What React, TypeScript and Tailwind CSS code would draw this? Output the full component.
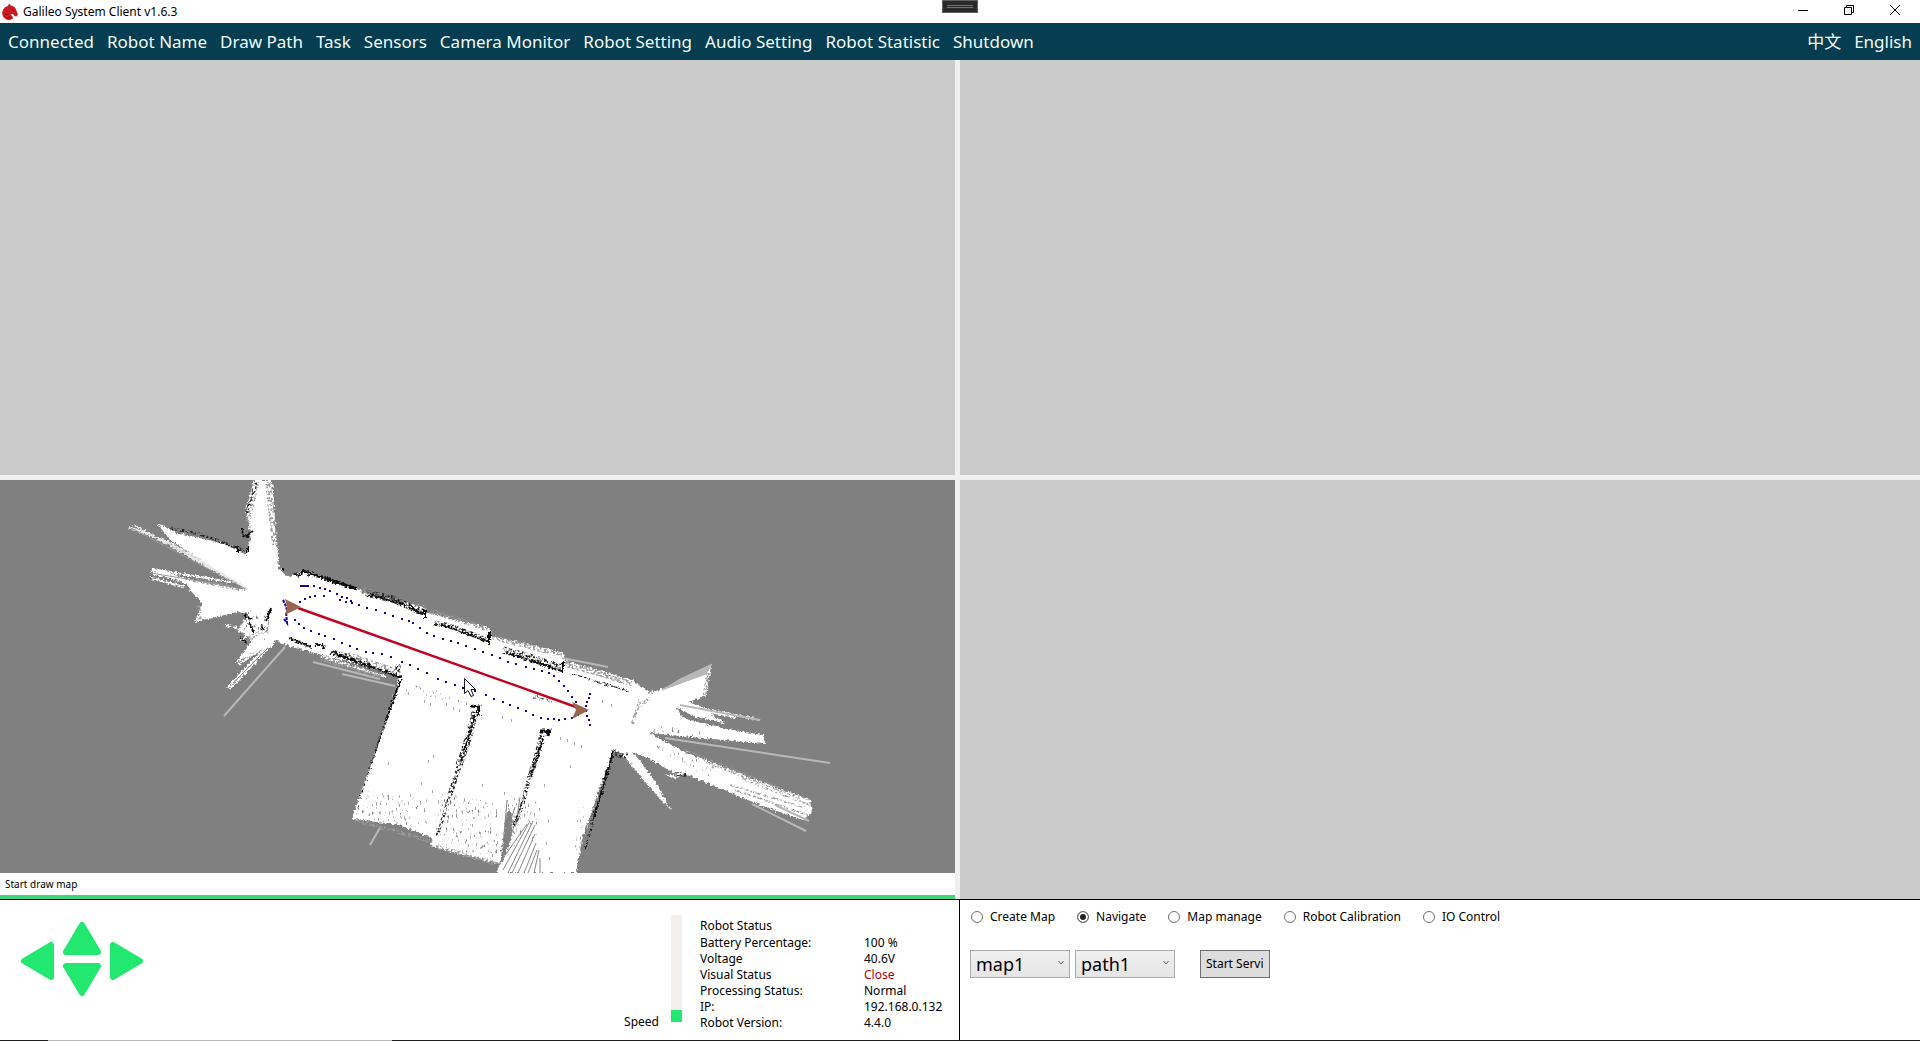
import React, { useState } from "react";

const font = "font-['Noto_Sans','Noto_Sans_CJK_SC',sans-serif]";

const menuItems = [
  "Connected",
  "Robot Name",
  "Draw Path",
  "Task",
  "Sensors",
  "Camera Monitor",
  "Robot Setting",
  "Audio Setting",
  "Robot Statistic",
  "Shutdown",
];

const statusRows = [
  { label: "Battery Percentage:", value: "100 %" },
  { label: "Voltage", value: "40.6V" },
  { label: "Visual Status", value: "Close", alert: true },
  { label: "Processing Status:", value: "Normal" },
  { label: "IP:", value: "192.168.0.132" },
  { label: "Robot Version:", value: "4.4.0" },
];

const modes = ["Create Map", "Navigate", "Map manage", "Robot Calibration", "IO Control"];

// waypoints of the planned path, in map coordinates
const pathDots: number[][] = [
  [314, 586], [320, 588], [325, 589], [330, 591], [337, 594], [342, 597], [347, 598], [352, 603],
  [359, 605], [367, 608], [376, 610], [385, 613], [393, 616], [402, 619], [409, 621], [413, 623],
  [420, 628], [427, 633], [434, 636], [443, 639], [451, 641], [458, 643], [466, 646], [475, 649],
  [483, 652], [492, 655], [500, 658], [508, 662], [516, 664], [526, 667], [534, 669], [542, 671],
  [549, 673], [554, 676], [559, 681], [564, 686], [568, 691], [572, 697], [576, 702],
  [315, 596], [310, 597], [305, 599], [300, 602], [324, 596], [340, 600], [346, 602], [351, 601],
  [295, 620], [299, 624], [304, 628], [311, 631], [319, 634], [325, 636], [334, 639], [342, 643],
  [350, 646], [357, 649], [366, 652], [373, 653], [382, 654], [391, 657], [402, 662], [410, 665],
  [418, 669], [427, 673], [438, 679], [446, 682], [455, 685], [463, 688], [475, 691], [486, 695],
  [494, 699], [503, 702], [510, 705], [518, 708], [526, 711], [533, 715], [541, 718], [548, 719],
  [554, 719], [559, 720], [565, 719], [572, 718], [578, 715],
  [590, 694], [589, 698], [587, 702], [586, 706], [586, 711], [587, 716], [589, 720], [590, 725],
];

const specks: number[][] = [
  [424, 700], [430, 703], [446, 703], [453, 707], [459, 709], [502, 716], [511, 719], [560, 737],
  [567, 739], [574, 742], [581, 745], [602, 700], [611, 704], [433, 755], [428, 760], [421, 782],
  [410, 794], [420, 801], [432, 790], [399, 804], [376, 802], [369, 813], [389, 812], [405, 818],
  [447, 820], [462, 811], [475, 807], [482, 784], [464, 798], [504, 792], [544, 784], [539, 808],
  [548, 820], [570, 765], [546, 842], [488, 814], [472, 824], [453, 828], [388, 762], [392, 694],
  [408, 692], [549, 857], [476, 843], [482, 845], [497, 841], [492, 854], [438, 800],
];

const Arrow = ({ d, label, className }: { d: string; label: string; className?: string }) => (
  <button aria-label={label} className={className}>
    <svg viewBox="0 0 40 40" className="w-10 h-10">
      <path d={d} fill="#22e871" stroke="#22e871" strokeWidth="6" strokeLinejoin="round" />
    </svg>
  </button>
);

const Horse = () => (
  <svg viewBox="0 0 16 18" className="w-4 h-[18px]" aria-hidden="true">
    <path
      d="M6 3 7 0.500 9 2.500C12 3 14 5 14.500 8L16 11.500 14.500 13.500 12.500 13 11 11 8.500 11.500 10.500 13.500 11 15.500 8 17C4 17 1 15 0.300 11 0 7 2 4 6 3Z"
      fill="#c81a20"
    />
    <path d="M3 12 6 11M5 15 9 14M10.500 7 12 7.500" stroke="#8c1015" fill="none" />
  </svg>
);

const TitleBar = () => (
  <header className="h-[23px] shrink-0 flex items-center justify-between bg-white text-black relative">
    <div className="flex items-center gap-[5px] pl-0.5">
      <Horse />
      <h1 className="text-xs">Galileo System Client v1.6.3</h1>
    </div>
    <div className="absolute left-1/2 top-0 w-9 h-[13px] -translate-x-1/2 border border-[#606060] bg-[#2b2b2b] px-1 pt-1">
      <div className="h-[3px] border-y border-[#707070]" />
    </div>
    <div className="flex h-full pr-0.5">
      <button aria-label="Minimize" className="w-[46px] flex justify-center">
        <svg viewBox="0 0 12 12" className="w-3 h-3 mt-1">
          <path d="M1 6.500H11" stroke="#000" />
        </svg>
      </button>
      <button aria-label="Restore" className="w-[46px] flex justify-center">
        <svg viewBox="0 0 12 12" className="w-3 h-3 mt-1">
          <path d="M1.500 3.500H8.500V10.500H1.500ZM3.500 3.500V1.500H10.500V8.500H8.500" fill="none" stroke="#000" />
        </svg>
      </button>
      <button aria-label="Close" className="w-[46px] flex justify-center">
        <svg viewBox="0 0 12 12" className="w-3 h-3 mt-1">
          <path d="M1 1 11 11M11 1 1 11" stroke="#000" />
        </svg>
      </button>
    </div>
  </header>
);

const MenuBar = () => (
  <nav className="h-[37px] shrink-0 flex items-center justify-between bg-[#073d50] text-[#f0fafa] text-[17px] px-2">
    <div className="flex gap-[13px]">
      {menuItems.map((item) => (
        <button key={item}>{item}</button>
      ))}
    </div>
    <div className="flex gap-[13px]">
      <button lang="zh">中文</button>
      <button>English</button>
    </div>
  </nav>
);

const RobotMap = () => (
  <svg
    viewBox="0 480 955 393"
    preserveAspectRatio="xMidYMid slice"
    className="absolute inset-0 w-full h-full"
    role="img"
    aria-label="Robot map"
  >
    <defs>
      <filter id="rough" x="0" y="480" width="955" height="393" filterUnits="userSpaceOnUse">
        <feTurbulence type="fractalNoise" baseFrequency="0.4" numOctaves="2" seed="4" />
        <feDisplacementMap in="SourceGraphic" scale="5" xChannelSelector="R" yChannelSelector="G" />
      </filter>
      {/* breaks a solid shape up into scattered scan hits */}
      <filter id="grain" x="0" y="480" width="955" height="393" filterUnits="userSpaceOnUse">
        <feTurbulence type="fractalNoise" baseFrequency="0.45" numOctaves="2" seed="9" />
        <feColorMatrix values="0 0 0 0 0  0 0 0 0 0  0 0 0 0 0  5 0 0 0 -2.200" result="mask" />
        <feComposite in="SourceGraphic" in2="mask" operator="in" />
      </filter>
      <filter id="sparse" x="0" y="480" width="955" height="393" filterUnits="userSpaceOnUse">
        <feTurbulence type="fractalNoise" baseFrequency="0.5 0.2" numOctaves="2" seed="21" />
        <feColorMatrix values="0 0 0 0 0  0 0 0 0 0  0 0 0 0 0  8 0 0 0 -5.100" result="mask" />
        <feComposite in="SourceGraphic" in2="mask" operator="in" />
      </filter>
    </defs>
    <rect y="480" width="955" height="393" fill="#808080" />
    <g filter="url(#rough)">
      {/* scanned free space */}
      <g fill="#fff">
        <path d="M254 480H272L279 569 288 577 297 574 301 570 358 588 362 593 424 607 426 612 489 628 492 636 562 652 566 661 632 680 650 693 674 685 711 666 706 695 680 706 695 714 722 728 763 735 765 744 649 733 683 751 741 774 810 800 812 812 803 820 760 805 685 774 674 779 632 757 613 750 582 840 576 873H496L500 864 466 856 430 846 433 839 425 835 399 825 352 819 360 795 380 740 400 676 342 660 311 652 289 646 275 640 235 664 252 640 238 630 249 614 237 612 195 622 202 603 190 590 187 584 150 571 154 568 190 580 246 590 170 540 157 523 178 533 230 545 246 555 251 535 246 510Z" />
        <path d="M620 752 633 753 653 778 671 810 661 800 640 776Z" />
        <path d="M650 690 700 706 725 723 690 720Z" />
      </g>
      {/* gaps between the scan rays */}
      <g fill="#808080">
        <path d="M676 707 696 717 757 731 709 725 683 718Z" />
        <path d="M505 822 509 808 513 822 511 838 503 862 500 866Z" />
        <path d="M632 752 652 760 680 776 654 773 656 778Z" />
        <path d="M230 633 237 641 228 638ZM226 626 240 629 228 629Z" />
      </g>
      <g stroke="#fff" strokeWidth="2" fill="none">
        <path d="M129 527 170 543 246 588M134 525 248 590" stroke="#e8e8e8" />
        <path d="M152 569 230 582M154 574 224 588M151 578 184 587" />
        <path d="M274 642 230 689M270 643 228 687M238 665 274 640M240 640 262 628M238 632 252 624M225 625 240 629" />
        <path d="M322 656 360 669M332 660 386 677" />
        <path d="M680 704 760 720M675 705 735 717" />
      </g>
    </g>
    {/* single far rays */}
    <g stroke="#b8b8b8" strokeWidth="2" fill="none">
      <path d="M285 647 224 716" />
      <path d="M342 674 395 686M313 662 380 679M370 845 381 826" />
      <path d="M562 658 608 667M680 705 760 720" />
      <path d="M665 738 830 763" />
      <path d="M752 804 806 831M775 805 809 821" />
      <path d="M712 664 706 674 662 690 680 679Z" fill="#b8b8b8" strokeWidth="1" />
    </g>
    <g stroke="#9a9a9a" fill="none">
      <path d="M133 529 246 589M151 573 230 586M233 683 268 648M324 661 380 676" />
      <path d="M565 663 629 681M567 667 620 681" strokeDasharray="3 2" />
    </g>
    <g stroke="#999" fill="none" filter="url(#grain)">
      <path d="M685 750 810 800M705 762 800 798M730 785 806 808M735 790 808 815M740 778 812 806" strokeWidth="2" />
      <path d="M363 589 422 609M430 611 488 629M492 637 562 655M565 663 632 684" strokeWidth="5" />
      <path d="M268 482 275 545" strokeWidth="6" />
      <path d="M257 482 247 525" strokeWidth="5" />
      <path d="M345 654 395 671M320 658 380 676" strokeWidth="6" />
      <path d="M708 670 704 698M640 700 632 725M650 698 640 706" strokeWidth="3" />
      <path d="M195 580 240 589M198 605 200 620M245 640 270 628" strokeWidth="4" />
      <path d="M355 820 430 841M434 846 500 865" strokeWidth="4" />
    </g>
    <g fill="#888" filter="url(#sparse)">
      <path d="M362 790 430 800 428 835 354 818Z" />
      <path d="M440 790 500 805 497 862 434 844Z" />
      <path d="M506 795 540 800 538 840 504 850Z" />
      <path d="M400 680 470 700 470 706 400 690ZM655 745 720 765 712 778 660 757ZM650 725 700 730V734H650Z" />
      <path d="M578 805 590 810 582 850H575ZM244 610 270 612 268 640 240 640Z" />
    </g>
    {/* fan of rays at the bottom edge */}
    <path
      d="M527 824 499 864M530 821 503 870M533 821 508 873M535 825 512 873M535 834 518 873M536 843 524 873M537 850 528 873M539 850 534 873M524 797 510 838M515 807 506 835M507 800 504 835M520 797 516 825M540 858V873"
      stroke="#888"
      fill="none"
    />
    {/* walls */}
    <g stroke="#222" fill="none" filter="url(#grain)">
      <path d="M366 593 393 599 424 613" strokeWidth="7" />
      <path d="M434 623 450 626 487 640" strokeWidth="5" />
      <path d="M503 650 527 656 562 668" strokeWidth="7" />
      <path d="M330 652 344 656 372 667" strokeWidth="6" />
      <path d="M475 712 469 736 459 765" strokeWidth="7" />
      <path d="M461 760 450 795" strokeWidth="5" />
      <path d="M450 795 437 836" strokeWidth="3" />
      <path d="M542 735 536 758 529 779" strokeWidth="5" />
      <path d="M530 775 522 806 514 826" strokeWidth="4" />
      <path d="M398 686 386 721 372 760" strokeWidth="2" />
      <path d="M170 528 200 534 245 551" strokeWidth="3" />
      <path d="M256 483 246 514" strokeWidth="3" />
      <path d="M612 750 620 756 628 755M676 775 686 774M398 664V676" strokeWidth="5" />
      <path d="M539 699 552 701M532 698 540 696" strokeWidth="3" stroke="#666" />
    </g>
    <g stroke="#111" fill="none" filter="url(#rough)">
      <path d="M300 576 303 571 357 589" strokeWidth="3" />
      <path d="M370 595 400 603 423 614M440 624 487 641M510 654 562 671" strokeWidth="2" strokeDasharray="18 2" />
      <path d="M573 674 628 691" />
      <path d="M489 632V645M425 610V618M563 662V673" strokeWidth="2" />
      <path d="M289 638 311 647M315 645 323 645 324 649M334 653 400 677 402 680" strokeWidth="2" />
      <path d="M401 680 393 700 386 721" strokeWidth="2" strokeDasharray="10 1" />
      <path d="M386 721 372 762 360 798" strokeDasharray="3 3" />
      <path d="M471 706 479 707 478 716M540 731 549 731 548 736" strokeWidth="3" />
      <path d="M475 716 469 736 461 762M543 739 530 779" strokeWidth="2" strokeDasharray="12 2" />
      <path d="M612 752V757L594 817" strokeWidth="2" />
      <path d="M594 817 585 850" strokeWidth="1" strokeDasharray="4 2" />
      <path d="M242 528 243 536 249 537M253 531 245 537M238 553V547M248 552V547" strokeWidth="2" />
      <path d="M271 608 266 621M262 625 263 630M244 615 250 619M249 622 254 632M240 638 247 642" strokeWidth="2" />
      <path d="M280 569 284 569M293 573 299 576" strokeWidth="2" />
    </g>
    <g fill="#aaa">
      {specks.map(([x, y], i) => (
        <rect key={i} x={x} y={y} width="1" height="3" />
      ))}
    </g>
    {/* planned path */}
    <g fill="#14069c" shapeRendering="crispEdges">
      {pathDots.map(([x, y], i) => (
        <rect key={i} x={x - 1} y={y - 1} width="2" height="2" />
      ))}
      <rect x="300" y="585" width="9" height="2" />
    </g>
    <path d="M283 600 285 604 287 610M284 619 287 623 286 612" stroke="#14069c" strokeWidth="2" strokeDasharray="3 1" fill="none" />
    <path d="M298 608 576 707" stroke="#c00424" strokeWidth="2.500" />
    <path d="M285 599 301 607 285 615 287 607Z" fill="#996550" />
    <path d="M572 702 589 710 572 719 576 710Z" fill="#996550" />
    <path
      d="M464.500 678.500V693.500L468 690.500 471 696.500 473.500 695.500 471 689.500H475.500Z"
      fill="#fff"
      stroke="#111"
    />
  </svg>
);

const DriveControls = () => (
  <div className="flex items-center gap-1 pl-[18px] pt-[19px] h-fit">
    <Arrow label="Left" className="mt-1" d="M6 20 33 4V36Z" />
    <div className="flex flex-col">
      <Arrow label="Forward" d="M20 6 36 33H4Z" />
      <Arrow label="Back" d="M4 7H36L20 34Z" />
    </div>
    <Arrow label="Right" className="mt-1" d="M7 4 34 20 7 36Z" />
  </div>
);

const StatusPanel = () => (
  <section className="flex text-xs leading-4 text-black pr-[5px]">
    <label htmlFor="speed" className="self-end pb-[10px] pr-3">
      Speed
    </label>
    <div className="relative w-[11px] h-[107px] mt-[15px] mr-[18px] bg-[#f3efec] flex flex-col justify-end">
      <div className="h-3 bg-[#22e871]" />
      <input
        id="speed"
        type="range"
        min="0"
        max="100"
        defaultValue="10"
        className="absolute inset-0 w-full h-full opacity-0"
      />
    </div>
    <div className="w-[255px] pt-[18px]">
      <h2 className="pb-px">Robot Status</h2>
      <table className="w-full text-left">
        <tbody>
          {statusRows.map((row) => (
            <tr key={row.label}>
              <th scope="row" className="w-[164px] p-0 font-normal">
                {row.label}
              </th>
              <td className={row.alert ? "p-0 text-[#b00020]" : "p-0"}>{row.value}</td>
            </tr>
          ))}
        </tbody>
      </table>
    </div>
  </section>
);

const Picker = ({ label, value }: { label: string; value: string }) => (
  <div className="relative">
    <select
      aria-label={label}
      className="appearance-none w-[100px] h-7 border border-[#acacac] bg-linear-to-b from-[#f0f0f0] to-[#e5e5e5] pl-[5px] text-lg leading-6 text-black"
    >
      <option>{value}</option>
    </select>
    <svg viewBox="0 0 8 6" className="absolute right-[5px] top-[10px] w-2 h-1.5 pointer-events-none">
      <path d="M1.500 1 4 4 6.500 1" stroke="#666" fill="none" />
    </svg>
  </div>
);

const NavigatePanel = () => {
  const [mode, setMode] = useState("Navigate");
  return (
    <section className="-ml-px border-l border-black pl-[11px] text-xs leading-4 text-black">
      <div className="flex gap-[22px] pt-[9px]">
        {modes.map((m) => (
          <label key={m} className="flex items-center gap-[7px]">
            <input
              type="radio"
              name="mode"
              checked={mode === m}
              onChange={() => setMode(m)}
              className="appearance-none w-3 h-3 rounded-full border border-[#707070] bg-white checked:bg-[#212121] checked:shadow-[inset_0_0_0_2px_#fff]"
            />
            {m}
          </label>
        ))}
      </div>
      <div className="flex mt-[25px] -ml-px gap-[5px]">
        <Picker label="Map" value="map1" />
        <Picker label="Path" value="path1" />
        <button className="ml-5 w-[70px] h-7 border border-[#707070] bg-[#dddddd] px-[5px] overflow-hidden whitespace-nowrap text-left">
          Start Servi
        </button>
      </div>
    </section>
  );
};

const App = () => {
  return (
    <div className={`${font} h-screen flex flex-col bg-white overflow-hidden`}>
      <TitleBar />
      <MenuBar />
      <main className="flex-1 min-h-0 grid grid-cols-2 bg-[#f0f0f0]">
        <div className="flex flex-col gap-[5px] pr-[5px]">
          <div className="flex-[415] bg-[#cbcbcb]" />
          <div className="flex-[419] flex flex-col bg-white">
            <div className="flex-1 relative overflow-hidden">
              <RobotMap />
            </div>
            <p className="h-[22px] pl-[5px] text-[10px] leading-[22px] text-black">Start draw map</p>
            <div className="h-1 bg-[#41d47d]" />
          </div>
        </div>
        <div className="flex flex-col gap-[5px]">
          <div className="flex-[415] bg-[#cbcbcb]" />
          <div className="flex-[419] bg-[#cbcbcb]" />
        </div>
      </main>
      <footer className="h-[142px] shrink-0 border-t border-black flex flex-col">
        <div className="flex-1 grid grid-cols-2">
          <div className="flex justify-between">
            <DriveControls />
            <StatusPanel />
          </div>
          <NavigatePanel />
        </div>
        <div className="h-px bg-[#241c20] pl-12">
          <div className="h-px w-[344px] bg-[#b8b8b8]" />
        </div>
      </footer>
    </div>
  );
};

export default App;
